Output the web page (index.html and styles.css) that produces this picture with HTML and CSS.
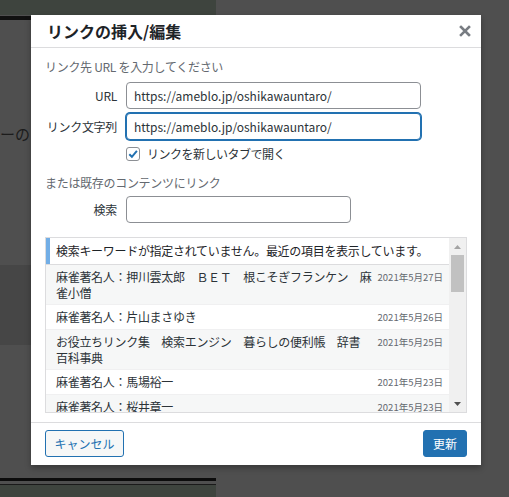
FILE: index.html
```html
<!DOCTYPE html>
<html lang="ja">
<head>
<meta charset="utf-8">
<title>リンクの挿入/編集</title>
<link rel="stylesheet" href="styles.css">
</head>
<body>
<div class="backdrop">
  <div class="bg-top"></div>
  <div class="bg-rule"></div>
  <div class="bg-text">ーの</div>
  <div class="bg-band"></div>
  <div class="bg-bottom-rule"></div>
  <div class="bg-bottom"></div>
</div>

<div class="modal" role="dialog" aria-labelledby="link-modal-title">
  <div class="modal-title">
    <h1 id="link-modal-title">リンクの挿入/編集</h1>
    <button class="close" type="button" aria-label="閉じる">
      <svg width="12" height="12" viewBox="0 0 12 12"><path d="M2 2 L10 10 M10 2 L2 10" stroke="#787c82" stroke-width="2.6" stroke-linecap="square" fill="none"/></svg>
    </button>
  </div>

  <div class="modal-body">
    <p class="hint">リンク先 URL を入力してください</p>
    <div class="field">
      <label class="field-label">URL</label>
      <input class="text-input" type="text" value="https://ameblo.jp/oshikawauntaro/">
    </div>
    <div class="field field-gap">
      <label class="field-label">リンク文字列</label>
      <input class="text-input is-focus" type="text" value="https://ameblo.jp/oshikawauntaro/">
    </div>
    <div class="check-row">
      <span class="checkbox">
        <svg width="12" height="12" viewBox="0 0 12 12"><path d="M2.3 6.2 L4.9 8.8 L9.9 2.9" stroke="#2271b1" stroke-width="2" fill="none"/></svg>
      </span>
      <span class="check-label">リンクを新しいタブで開く</span>
    </div>

    <p class="section-label">または既存のコンテンツにリンク</p>
    <div class="field field-search">
      <label class="field-label">検索</label>
      <input class="text-input search-input" type="text" value="">
    </div>

    <div class="results">
      <ul class="list">
        <li class="notice"><span>検索キーワードが指定されていません。最近の項目を表示しています。</span></li>
        <li class="item alt"><span class="item-title">麻雀著名人：押川雲太郎　ＢＥＴ　根こそぎフランケン　麻雀小僧</span><span class="item-info">2021年5月27日</span></li>
        <li class="item"><span class="item-title">麻雀著名人：片山まさゆき</span><span class="item-info">2021年5月26日</span></li>
        <li class="item alt"><span class="item-title">お役立ちリンク集　検索エンジン　暮らしの便利帳　辞書　百科事典</span><span class="item-info">2021年5月25日</span></li>
        <li class="item"><span class="item-title">麻雀著名人：馬場裕一</span><span class="item-info">2021年5月23日</span></li>
        <li class="item alt"><span class="item-title">麻雀著名人：桜井章一</span><span class="item-info">2021年5月23日</span></li>
      </ul>
      <div class="scrollbar">
        <div class="sb-btn">
          <svg width="7" height="4" viewBox="0 0 7 4"><path d="M0 4 L3.5 0 L7 4 Z" fill="#a3a3a3"/></svg>
        </div>
        <div class="sb-track"><div class="sb-thumb"></div></div>
        <div class="sb-btn">
          <svg width="7" height="4" viewBox="0 0 7 4"><path d="M0 0 L7 0 L3.5 4 Z" fill="#505050"/></svg>
        </div>
      </div>
    </div>
  </div>

  <div class="modal-footer">
    <button class="btn btn-secondary" type="button">キャンセル</button>
    <button class="btn btn-primary" type="button">更新</button>
  </div>
</div>
</body>
</html>
```
FILE: styles.css
```css
* { box-sizing: border-box; }
html, body { margin: 0; padding: 0; }
body {
  width: 509px;
  height: 497px;
  overflow: hidden;
  position: relative;
  background: #4f4f4f;
  font-family: "Noto Sans CJK JP", "Noto Sans", sans-serif;
}

/* page behind the overlay */
.backdrop { width: 216px; display: flex; flex-direction: column; }
.bg-top { height: 15px; background: #3e443e; }
.bg-rule { margin-top: 1px; height: 4px; background: #101010; }
.bg-text {
  margin-top: 105px;
  height: 18px;
  font-size: 15px;
  line-height: 18px;
  color: #1c1c1c;
  white-space: nowrap;
}
.bg-band { margin-top: 122px; height: 80px; background: #464646; }
.bg-bottom-rule { margin-top: 133px; height: 3px; background: #0c0c0c; }
.bg-bottom { margin-top: 3px; height: 16px; border-top: 1px solid #1a1a1a; background: #3e443e; }

/* dialog */
.modal {
  position: absolute;
  left: 31px;
  top: 15px;
  width: 450px;
  height: 450px;
  background: #fff;
  box-shadow: 0 3px 6px rgba(0, 0, 0, 0.3);
  display: flex;
  flex-direction: column;
}
.modal-title {
  height: 33px;
  padding: 0 10px 0 16px;
  display: flex;
  align-items: center;
  justify-content: space-between;
  border-bottom: 1px solid #dcdcde;
}
.modal-title h1 {
  margin: 0;
  font-size: 16px;
  font-weight: 700;
  line-height: 32px;
  color: #1d2327;
}
.close {
  width: 12px;
  height: 12px;
  padding: 0;
  border: 0;
  background: none;
  display: flex;
}

.modal-body {
  height: 375px;
  padding: 0 14px;
  display: flex;
  flex-direction: column;
  border-bottom: 1px solid #dcdcde;
}
.hint, .section-label {
  margin: 11px 0 0;
  font-size: 12px;
  line-height: 16px;
  color: #646970;
  letter-spacing: -0.3px;
}
.section-label { margin-top: 14px; }

.field {
  margin-top: 7px;
  display: grid;
  grid-template-columns: 72px auto;
  column-gap: 9px;
  align-items: center;
  justify-content: start;
}
.field-gap { margin-top: 4px; }
.field-search { margin-top: 5px; }
.field-label {
  text-align: right;
  font-size: 12px;
  line-height: 16px;
  color: #2c3338;
  letter-spacing: -0.3px;
}
.text-input {
  width: 295px;
  height: 27px;
  margin: 0;
  padding: 0 7px;
  border: 1px solid #8c8f94;
  border-radius: 4px;
  background: #fff;
  font-family: inherit;
  font-size: 12px;
  color: #2c3338;
  outline: none;
}
.text-input.is-focus {
  border-color: #2271b1;
  box-shadow: 0 0 0 1px #2271b1;
}
.search-input { width: 225px; }

.check-row {
  margin-top: 7px;
  margin-left: 81px;
  height: 14px;
  display: flex;
  align-items: center;
  gap: 7px;
}
.checkbox {
  width: 14px;
  height: 14px;
  border: 1px solid #8c8f94;
  border-radius: 3px;
  background: #fff;
  display: flex;
  align-items: center;
  justify-content: center;
}
.check-label {
  font-size: 12px;
  line-height: 14px;
  color: #2c3338;
  letter-spacing: -0.5px;
}

/* results */
.results {
  margin-top: 14px;
  height: 176px;
  border: 1px solid #dcdcde;
  display: flex;
  overflow: hidden;
}
.list {
  flex: 1;
  margin: 0;
  padding: 0;
  list-style: none;
  overflow: hidden;
}
.notice {
  border-bottom: 1px solid #dcdcde;
  background: #fff;
}
.notice span {
  display: block;
  padding: 5px 6px;
  border-left: 4px solid #72aee6;
  font-size: 12px;
  line-height: 16px;
  color: #1d2327;
  letter-spacing: -0.3px;
}
.item {
  display: flex;
  align-items: flex-start;
  justify-content: space-between;
  padding: 4px 6px 3px 10px;
  border-bottom: 1px solid #f0f0f1;
  background: #fff;
  font-size: 12px;
  line-height: 16px;
  color: #2c3338;
}
.item.alt { background: #f6f7f7; }
.item-title { flex: 0 0 318px; letter-spacing: -0.3px; }
.item-info {
  flex: 0 0 auto;
  font-size: 9.5px;
  line-height: 17px;
  color: #646970;
  white-space: nowrap;
}

.scrollbar {
  width: 17px;
  background: #f0f0f0;
  display: flex;
  flex-direction: column;
}
.sb-btn {
  height: 17px;
  display: flex;
  align-items: center;
  justify-content: center;
}
.sb-track { flex: 1; }
.sb-thumb {
  width: 13px;
  height: 37px;
  margin-left: 2px;
  background: #c1c1c1;
}

/* footer */
.modal-footer {
  height: 42px;
  padding: 7px 14px 0;
  display: flex;
  justify-content: space-between;
  align-items: flex-start;
}
.btn {
  height: 27px;
  margin: 0;
  padding: 0;
  border-radius: 3px;
  font-family: inherit;
  font-size: 12px;
  line-height: 25px;
  text-align: center;
  white-space: nowrap;
}
.btn-secondary {
  width: 79px;
  border: 1px solid #2271b1;
  background: #f6f7f7;
  color: #2271b1;
}
.btn-primary {
  width: 44px;
  border: 1px solid #2271b1;
  background: #2271b1;
  color: #fff;
}
```
